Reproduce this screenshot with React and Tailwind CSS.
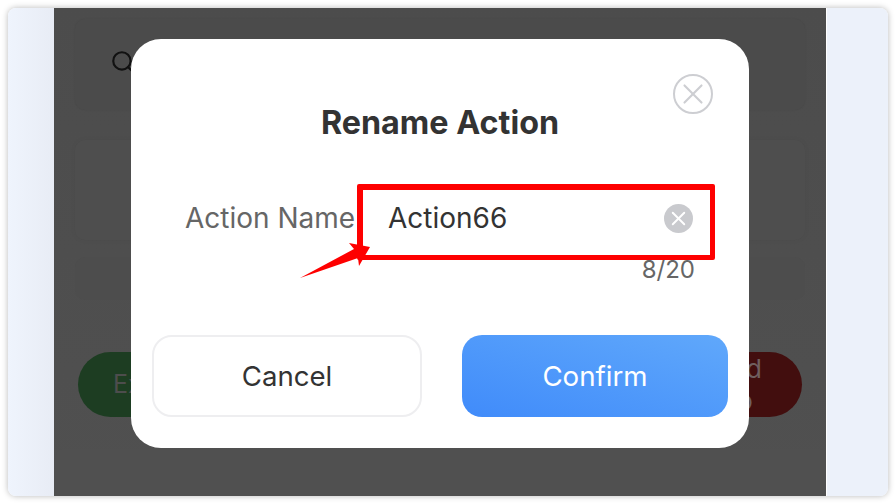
import { X, Search } from 'lucide-react';

function BackgroundPage() {
  return (
    <div className="flex h-[488px] flex-1 flex-col bg-gradient-to-b from-[#4c4c4c] to-[#505050]">
      <div className="flex flex-1 flex-col px-[21px] pt-[11px]">
        <div className="flex h-[91px] items-start rounded-[10px] bg-[#4b4b4b] pl-[35px] pt-[30px] shadow-[0_0_2px_rgba(0,0,0,0.08)]">
          <Search className="h-[26px] w-[26px] text-[#111111]" strokeWidth={2} />
        </div>
        <div className="mt-[30px] h-[100px] rounded-[10px] bg-[#4e4e4e] shadow-[0_0_6px_rgba(0,0,0,0.04)]" />
        <div className="mt-[17px] h-[43px] rounded-[10px] bg-[#4d4d4d]" />
        <div className="mt-[52px] flex items-center justify-between px-[3px]">
          <div className="flex h-[65px] w-[150px] items-center rounded-full bg-[#1d3d22] pl-[35px] text-[25px] text-[#4d4d4d]">
            Export
          </div>
          <div className="flex h-[65px] w-[150px] items-center justify-end rounded-full bg-[#420e0e] pr-[40px] text-center text-[26px] leading-[32px] text-[#6f5f5f]">
            <span>
              Add
              <br />
              do
            </span>
          </div>
        </div>
      </div>
      <div className="ml-[2px] h-[47px] rounded-t-[6px] bg-[#505050]" />
    </div>
  );
}

function RenameDialog() {
  return (
    <div className="absolute left-[131px] top-[39px] h-[409px] w-[618px] rounded-[30px] bg-white px-[21px]">
      <div className="flex justify-end pr-[15px] pt-[35px]">
        <button className="flex h-[40px] w-[40px] items-center justify-center rounded-full border-2 border-[#cdced2]">
          <X className="h-[34px] w-[34px] shrink-0 text-[#cdced2]" strokeWidth={1.5} />
        </button>
      </div>
      <h2 className="-mt-[13px] text-center text-[32.3px] font-bold leading-[44px] text-[#333333]">Rename Action</h2>

      <div className="mt-[43px] flex h-[60px] items-center">
        <label className="w-[202px] whitespace-nowrap pl-[33px] text-[28px] text-[#666666]">Action Name</label>
        <span className="flex-1 pl-[34px] text-[28px] text-[#333333]">Action66</span>
        <span className="mr-[35px] flex h-[29px] w-[29px] items-center justify-center rounded-full bg-[#c9cace]">
          <X className="h-[23px] w-[23px] shrink-0 text-white" strokeWidth={2} />
        </span>
      </div>
      <div className="mt-[7px] pr-[33px] text-right text-[24px] leading-[30px] text-[#666666]">8/20</div>

      <div className="mt-[50px] flex justify-between">
        <button className="h-[82px] w-[270px] rounded-[20px] border-2 border-[#eeeef0] bg-white pt-0.5 text-[27.6px] text-[#333333]">
          Cancel
        </button>
        <button className="h-[82px] w-[266px] rounded-[20px] bg-gradient-to-tr from-[#408bfa] to-[#60a8fb] pt-0.5 text-[27.7px] text-white">
          Confirm
        </button>
      </div>
    </div>
  );
}

export default function App() {
  return (
    <div className="relative h-[504px] w-[896px] overflow-hidden bg-white p-2 font-['Inter','Noto_Sans',sans-serif]">
      <div className="flex h-[488px] w-[880px] overflow-hidden rounded-[8px] shadow-[0_0_6px_rgba(0,0,0,0.28)]">
        <div className="w-[46px] bg-gradient-to-r from-[#eff4fd] to-[#e8ecf5]" />
        <BackgroundPage />
        <div className="w-[62px] border-l border-white bg-[#ecf1fa]" />
      </div>

      <RenameDialog />

      {/* red annotation over the input */}
      <div className="absolute left-[357px] top-[184px] h-[76px] w-[358px] rounded-[2px] border-[6px] border-b-[5px] border-r-[5px] border-[#fe0000]" />
      <svg className="absolute left-[298px] top-[240px]" width="76" height="44" viewBox="0 0 76 44">
        <polygon points="2,38 56,9 51,3 72,7 61,26 60,18" fill="#fe0000" />
      </svg>
    </div>
  );
}
